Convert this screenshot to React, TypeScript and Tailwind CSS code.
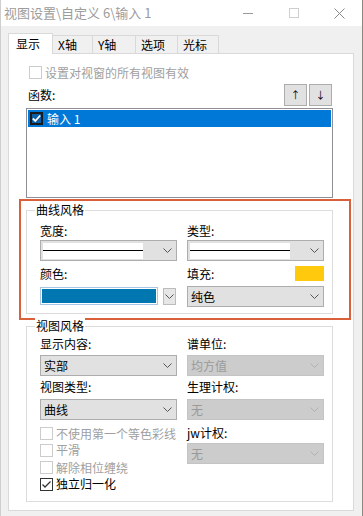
import type { ReactNode } from 'react'

const font = "font-['Noto_Sans_CJK_SC','Noto_Sans',sans-serif]"

function Chevron({ muted }: { muted?: boolean }) {
  return (
    <svg width="9" height="5" viewBox="0 0 9 5" className={muted ? 'text-[#b0b0b0]' : 'text-[#555555]'}>
      <polyline points="0.5,0.5 4.5,4.5 8.5,0.5" fill="none" stroke="currentColor" strokeWidth="1" />
    </svg>
  )
}

function Combo({ children, disabled }: { children?: ReactNode; disabled?: boolean }) {
  return (
    <div
      className={`flex h-[21px] w-[137px] items-center justify-between border pl-[2px] pr-[4px] ${
        disabled ? 'border-[#c4c4c4] bg-[#cccccc] text-[#9a9a9a]' : 'border-[#adadad] bg-[#e1e1e1] text-black'
      }`}
    >
      <div className="flex items-center pl-px">{children}</div>
      <Chevron muted={disabled} />
    </div>
  )
}

function LineSample() {
  return (
    <div className="-ml-px flex h-[16px] w-[100px] items-center bg-white">
      <div className="h-[1.5px] w-full bg-black" />
    </div>
  )
}

function Check({ checked, disabled, label }: { checked?: boolean; disabled?: boolean; label: string }) {
  return (
    <div className="flex items-center gap-[3px]">
      <div
        className={`flex h-[13px] w-[13px] items-center justify-center border bg-white ${
          disabled ? 'border-[#cccccc]' : 'border-[#333333]'
        }`}
      >
        {checked && (
          <svg width="11" height="11" viewBox="0 0 11 11">
            <polyline points="1.5,5.5 4,8 9.5,2.5" fill="none" stroke="#333" strokeWidth="1.3" />
          </svg>
        )}
      </div>
      <span className={disabled ? 'text-[#a0a0a0]' : 'text-black'}>{label}</span>
    </div>
  )
}

function Label({ children, className = '' }: { children: ReactNode; className?: string }) {
  return <div className={`h-[16px] leading-[16px] ${className}`}>{children}</div>
}

function Group({ title, className, children }: { title: string; className: string; children: ReactNode }) {
  return (
    <div className={`relative border border-[#dcdcdc] ${className}`}>
      <div className="absolute -top-[9px] left-[8px] bg-white px-px leading-[16px]">{title}</div>
      {children}
    </div>
  )
}

const tabs = ['X轴', 'Y轴', '选项', '光标']
const tabWidths = ['w-[40px]', 'w-[43px]', 'w-[42px]', 'w-[41px]']

export default function App() {
  return (
    <div className={`${font} h-[516px] w-[363px] overflow-hidden border-l border-r border-l-[#cfcfcf] border-r-[#8a8a80] bg-[#f0f0f0] text-[12px] leading-[16px] text-black`}>
      {/* title bar */}
      <div className="flex h-[26px] items-center bg-white pl-[3px] text-[13px] text-[#9c9c9c]">
        <span className="flex-1">视图设置\自定义 6\输入 1</span>
        <div className="flex items-center">
          <div className="mr-[36px] h-px w-[10px] bg-[#9a9a9a]" />
          <div className="mr-[35px] h-[10px] w-[10px] border border-[#cfcfcf]" />
          <svg width="11" height="11" viewBox="0 0 11 11" className="mr-[17px]">
            <path d="M0.5 0.5 L10.5 10.5 M10.5 0.5 L0.5 10.5" stroke="#8a8a8a" strokeWidth="1" />
          </svg>
        </div>
      </div>

      {/* tabs */}
      <div className="ml-[7px] mt-[7px] flex items-end">
        <div className="relative z-10 -mb-px h-[21px] w-[45px] border border-b-0 border-[#d9d9d9] bg-white pl-[7px] pt-[2px]">
          显示
        </div>
        {tabs.map((t, i) => (
          <div
            key={t}
            className={`h-[18px] ${tabWidths[i]} border border-b-0 border-l-0 border-[#d9d9d9] bg-[#f0f0f0] pl-[5px] pt-[1px]`}
          >
            {t}
          </div>
        ))}
      </div>

      {/* panel */}
      <div className="ml-[7px] h-[458px] w-[346px] border border-[#d9d9d9] bg-white">
        <div className="ml-[20px] mt-[12px] flex h-[13px] items-center">
          <Check disabled label="设置对视窗的所有视图有效" />
        </div>

        <div className="ml-[17px] mt-[5px] flex h-[22px] w-[306px] items-center justify-between">
          <span className="pl-[2px]">函数:</span>
          <div className="flex gap-[2px]">
            <div className="flex h-[22px] w-[23px] items-center justify-center border border-[#adadad] bg-[#e1e1e1] text-[10px]">↑</div>
            <div className="flex h-[22px] w-[23px] items-center justify-center border border-[#adadad] bg-[#e1e1e1] text-[10px]">↓</div>
          </div>
        </div>

        <div className="ml-[17px] mt-[2px] h-[90px] w-[307px] border border-[#8f8f95] p-px">
          <div className="flex h-[17px] items-center gap-[4px] bg-[#0078d7] pl-[2px] text-white">
            <div className="flex h-[13px] w-[13px] items-center justify-center border-2 border-[#1a1a1a] bg-[#0b5fa5]">
              <svg width="9" height="9" viewBox="0 0 9 9">
                <polyline points="0.8,4.5 3.3,7 8.2,1.5" fill="none" stroke="#fff" strokeWidth="1.8" />
              </svg>
            </div>
            <span>输入 1</span>
          </div>
        </div>

        {/* highlighted curve style */}
        <div className="ml-[10px] mt-px h-[121px] w-[332px] border-2 border-[#d9603b] pl-[5px] pt-[9px]">
          <Group title="曲线风格" className="h-[104px] w-[307px]">
            <div className="flex gap-[10px] pl-[13px] pt-[12px]">
              <div className="flex flex-col">
                <Label>宽度:</Label>
                <div className="mt-px">
                  <Combo>
                    <LineSample />
                  </Combo>
                </div>
                <div className="flex h-[25px] items-center">颜色:</div>
                <div className="mt-px flex items-center">
                  <div className="h-[18px] w-[118px] border border-[#a9c6e6] bg-white p-px">
                    <div className="h-full w-[114px] bg-[#0077b0]" />
                  </div>
                  <div className="ml-[5px] flex h-[17px] w-[13px] items-center justify-center border border-[#bcbcbc] bg-[#e6e6e6]">
                    <Chevron />
                  </div>
                </div>
              </div>
              <div className="flex flex-col">
                <Label>类型:</Label>
                <div className="mt-px">
                  <Combo>
                    <LineSample />
                  </Combo>
                </div>
                <div className="flex h-[25px] items-center justify-between">
                  <span>填充:</span>
                  <div className="h-[15px] w-[29px] bg-[#ffc90e]" />
                </div>
                <Combo>纯色</Combo>
              </div>
            </div>
          </Group>
        </div>

        {/* view style */}
        <div className="ml-[17px] mt-[6px]">
          <Group title="视图风格" className="h-[176px] w-[307px]">
            <div className="flex gap-[10px] pl-[13px] pt-[9px]">
              <div className="flex flex-col">
                <Label>显示内容:</Label>
                <div className="mt-[3px]">
                  <Combo>实部</Combo>
                </div>
                <Label className="mt-[3px]">视图类型:</Label>
                <div className="mt-[4px]">
                  <Combo>曲线</Combo>
                </div>
                <div className="mt-[6px] flex h-[15px] items-center">
                  <Check disabled label="不使用第一个等色彩线" />
                </div>
                <div className="flex h-[18px] items-center">
                  <Check disabled label="平滑" />
                </div>
                <div className="flex h-[17px] items-center">
                  <Check disabled label="解除相位缠绕" />
                </div>
                <div className="flex h-[16px] items-center">
                  <Check checked label="独立归一化" />
                </div>
              </div>
              <div className="flex flex-col">
                <Label>谱单位:</Label>
                <div className="mt-[3px]">
                  <Combo disabled>均方值</Combo>
                </div>
                <Label className="mt-[3px]">生理计权:</Label>
                <div className="mt-[4px]">
                  <Combo disabled>无</Combo>
                </div>
                <Label className="mt-[5px]">jw计权:</Label>
                <div className="mt-[2px]">
                  <Combo disabled>无</Combo>
                </div>
              </div>
            </div>
          </Group>
        </div>
      </div>
    </div>
  )
}
